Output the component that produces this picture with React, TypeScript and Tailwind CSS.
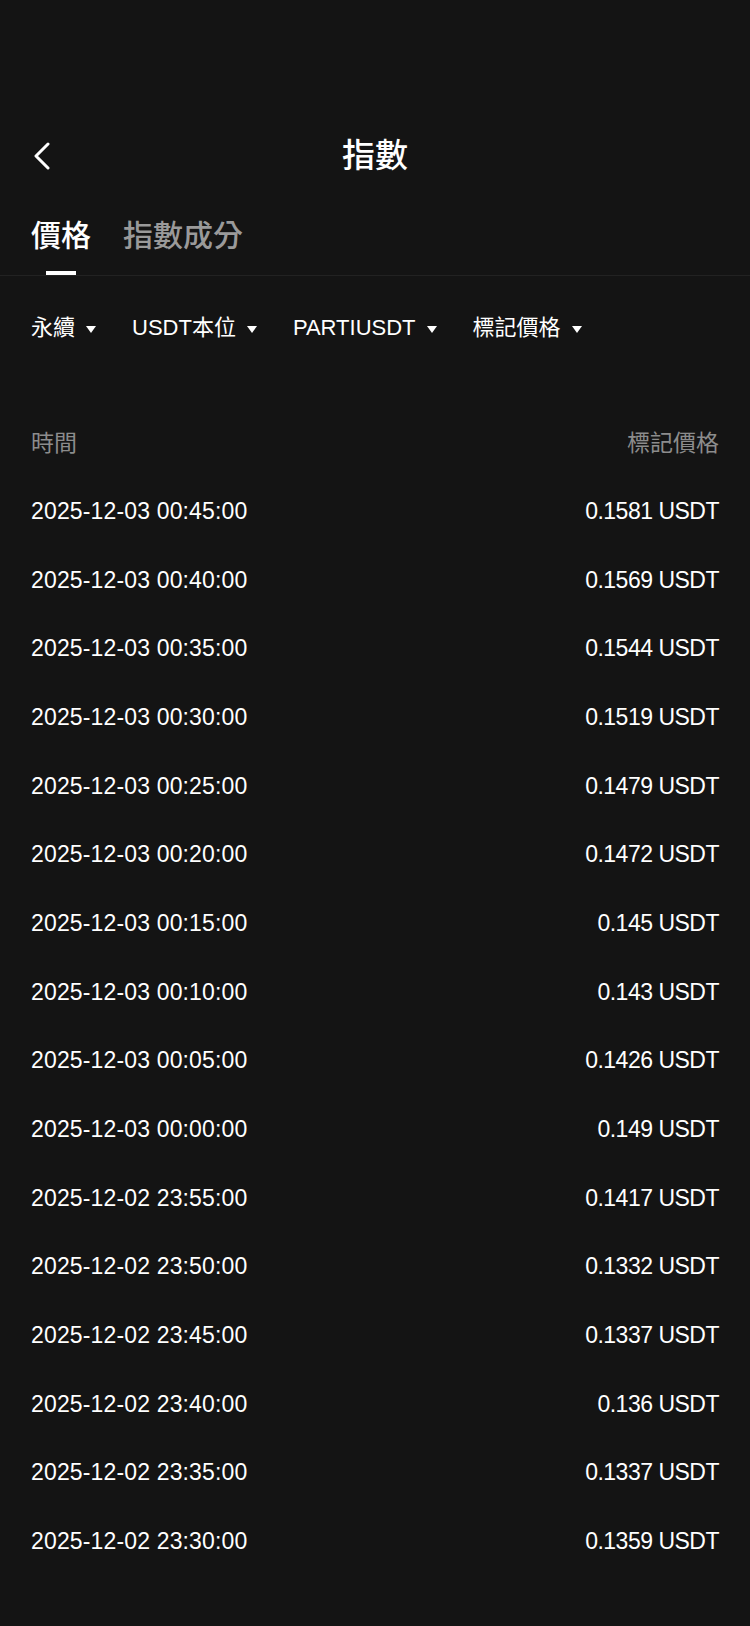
import React from "react";

const rows: [string, string][] = [
  ["2025-12-03 00:45:00", "0.1581 USDT"],
  ["2025-12-03 00:40:00", "0.1569 USDT"],
  ["2025-12-03 00:35:00", "0.1544 USDT"],
  ["2025-12-03 00:30:00", "0.1519 USDT"],
  ["2025-12-03 00:25:00", "0.1479 USDT"],
  ["2025-12-03 00:20:00", "0.1472 USDT"],
  ["2025-12-03 00:15:00", "0.145 USDT"],
  ["2025-12-03 00:10:00", "0.143 USDT"],
  ["2025-12-03 00:05:00", "0.1426 USDT"],
  ["2025-12-03 00:00:00", "0.149 USDT"],
  ["2025-12-02 23:55:00", "0.1417 USDT"],
  ["2025-12-02 23:50:00", "0.1332 USDT"],
  ["2025-12-02 23:45:00", "0.1337 USDT"],
  ["2025-12-02 23:40:00", "0.136 USDT"],
  ["2025-12-02 23:35:00", "0.1337 USDT"],
  ["2025-12-02 23:30:00", "0.1359 USDT"],
];

const font = {
  fontFamily: '"Liberation Sans", "Noto Sans CJK TC", sans-serif',
};

function Caret() {
  return (
    <svg width="10" height="7" viewBox="0 0 10 7" className="mt-[3px]">
      <path d="M0 0 H10 L5 7 Z" fill="#ffffff" />
    </svg>
  );
}

function Filter({ label }: { label: string }) {
  return (
    <div className="flex items-center gap-[11px]">
      <span className="text-[22px] leading-[30px] text-white">{label}</span>
      <Caret />
    </div>
  );
}

export default function App() {
  return (
    <div className="min-h-screen w-full bg-[#141414] text-white" style={font}>
      <div className="h-[113px]" />
      {/* Header */}
      <div className="grid h-[86px] grid-cols-[1fr_auto_1fr] items-center px-[33px]">
        <div className="flex items-center">
          <svg width="18" height="28" viewBox="0 0 18 28" fill="none">
            <path
              d="M15 2 L3 14 L15 26"
              stroke="#ffffff"
              strokeWidth="3"
              strokeLinecap="round"
              strokeLinejoin="round"
            />
          </svg>
        </div>
        <div className="text-[33px] font-medium leading-[40px] text-white">指數</div>
        <div />
      </div>
      {/* Tabs */}
      <div className="flex gap-[32px] border-b border-[#222222] px-[31px] pt-[17px]">
        <div className="flex flex-col items-center">
          <span className="text-[30px] font-medium leading-[40px] text-white">價格</span>
          <div className="mt-[15px] h-[4px] w-[30px] bg-white" />
        </div>
        <div className="flex flex-col items-center">
          <span className="text-[30px] font-medium leading-[40px] text-[#9a9a9a]">指數成分</span>
        </div>
      </div>
      {/* Filters */}
      <div className="flex h-[104px] items-center gap-[36px] px-[31px]">
        <Filter label="永續" />
        <Filter label="USDT本位" />
        <Filter label="PARTIUSDT" />
        <Filter label="標記價格" />
      </div>
      {/* Table */}
      <div className="mt-[29px] px-[31px]">
        <div className="flex h-[68px] items-center justify-between text-[23px] text-[#8c8c8c]">
          <span>時間</span>
          <span>標記價格</span>
        </div>
        {rows.map(([t, p]) => (
          <div
            key={t}
            className="flex h-[68.67px] items-center justify-between text-[23px] text-white"
          >
            <span className="tracking-[0.15px]">{t}</span>
            <span className="tracking-[-0.5px]">{p}</span>
          </div>
        ))}
      </div>
    </div>
  );
}
